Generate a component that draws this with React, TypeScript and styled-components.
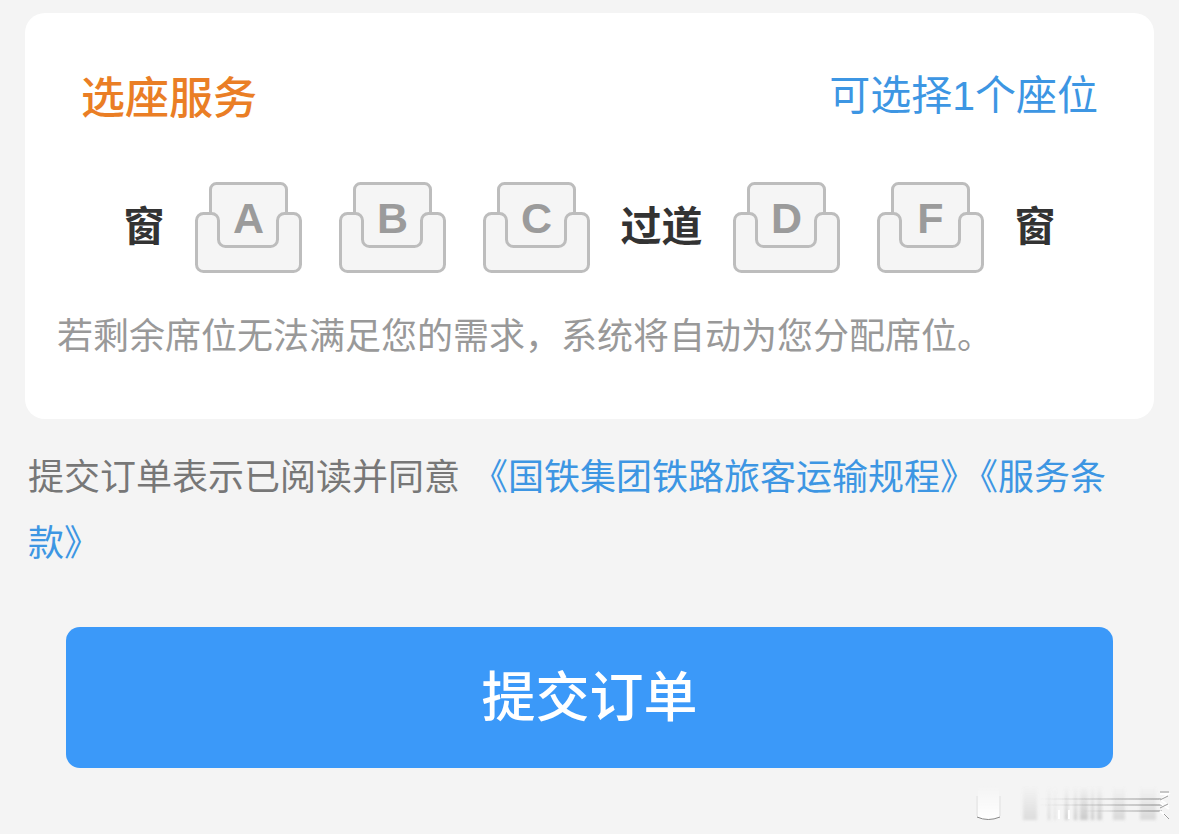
import React, { useState } from "react";
import styled, { createGlobalStyle } from "styled-components";

const GlobalStyle = createGlobalStyle`
  * { box-sizing: border-box; }
  body {
    margin: 0;
    background: #f4f4f4;
    font-family: "Noto Sans CJK SC", sans-serif;
  }
`;

const Page = styled.main`
  padding: 13px 25px 8px;
`;

const Card = styled.section`
  background: #fff;
  border-radius: 20px;
  padding: 50px 32px 62px;
`;

const CardHeader = styled.header`
  display: flex;
  justify-content: space-between;
  align-items: flex-start;
  padding: 0 24px;
`;

const Title = styled.h1`
  margin: 0;
  font-size: 44px;
  line-height: 64px;
  font-weight: 500;
  color: #ea7e25;
`;

const SeatCount = styled.span`
  font-family: "Liberation Sans", "Noto Sans CJK SC", sans-serif;
  font-size: 41px;
  line-height: 66px;
  color: #3d96e3;
`;

const SeatRow = styled.div`
  display: flex;
  justify-content: center;
  align-items: flex-start;
  gap: 30px;
  margin-top: 53px;
`;

const SeatGroup = styled.div`
  display: flex;
  gap: 36px;
`;

const Place = styled.span`
  font-size: 41px;
  line-height: 83px;
  font-weight: 700;
  color: #333;
`;

const SeatButton = styled.button`
  display: grid;
  justify-items: center;
  padding: 0;
  border: 0;
  background: none;
  cursor: pointer;
`;

const SeatShape = styled.svg<{ $selected: boolean }>`
  grid-area: 1 / 1;
  display: block;
  fill: ${(p) => (p.$selected ? "#dceeff" : "#f5f5f5")};
  stroke: ${(p) => (p.$selected ? "#3b99f9" : "#bdbdbd")};
  stroke-width: 3;
`;

const SeatLetter = styled.span<{ $selected: boolean }>`
  grid-area: 1 / 1;
  padding-top: 12px;
  font-family: "Liberation Sans", Arial, sans-serif;
  font-size: 43px;
  line-height: 48px;
  font-weight: 700;
  color: ${(p) => (p.$selected ? "#3b99f9" : "#9b9b9b")};
`;

const Note = styled.p`
  margin: 35px 0 0;
  font-size: 36px;
  line-height: 48px;
  color: #999;
`;

const Terms = styled.p`
  margin: 22px 3px 0;
  font-size: 36px;
  line-height: 66px;
  color: #777;
`;

const TermsLink = styled.a`
  margin-left: 4px;
  color: #3d96e3;
  text-decoration: none;
`;

const Submit = styled.button`
  display: block;
  width: calc(100% - 82px);
  margin: 54px 41px 0;
  padding: 26px 30px 34px;
  border: 0;
  border-radius: 14px;
  background: #3b99f9;
  color: #fff;
  font-family: inherit;
  font-size: 54px;
  line-height: 81px;
  font-weight: 500;
  cursor: pointer;
`;

const Footer = styled.footer`
  display: flex;
  justify-content: flex-end;
  margin: 18px -20px 0 0;
`;

function Seat({ letter, selected, onPick }: { letter: string; selected: boolean; onPick: () => void }) {
  return (
    <SeatButton type="button" aria-pressed={selected} onClick={onPick}>
      <SeatShape $selected={selected} width="108" height="92" viewBox="0 0 108 92" aria-hidden="true">
        <path d="M15.5 34V7.500a6 6 0 0 1 6-6h64a6 6 0 0 1 6 6V34L83 64H24z" stroke="none" />
        <path d="M15.5 33V7.500a6 6 0 0 1 6-6h64a6 6 0 0 1 6 6V33" fill="none" />
        <path d="M1.500 38.500a7 7 0 0 1 7-7h8a7 7 0 0 1 7 7v19a7 7 0 0 0 7 7h45a7 7 0 0 0 7-7v-19a7 7 0 0 1 7-7h9a7 7 0 0 1 7 7v44a7 7 0 0 1-7 7h-90a7 7 0 0 1-7-7z" />
      </SeatShape>
      <SeatLetter $selected={selected}>{letter}</SeatLetter>
    </SeatButton>
  );
}

const smudges = [
  { x: 53, w: 14, o: 0.16 },
  { x: 78, w: 2, o: 0.22 },
  { x: 84, w: 2, o: 0.14 },
  { x: 95, w: 3, o: 0.28 },
  { x: 104, w: 3, o: 0.28 },
  { x: 110, w: 8, o: 0.28 },
  { x: 121, w: 3, o: 0.3 },
  { x: 127, w: 5, o: 0.25 },
  { x: 143, w: 12, o: 0.18 },
  { x: 170, w: 16, o: 0.18 },
];

function Watermark() {
  return (
    <svg width="204" height="40" viewBox="0 0 204 40" aria-hidden="true">
      <defs>
        <linearGradient id="fade" x1="0" y1="0" x2="0" y2="1">
          <stop offset="0" stopColor="#888" stopOpacity="0" />
          <stop offset="1" stopColor="#888" />
        </linearGradient>
        <linearGradient id="light" x1="0" y1="0" x2="0" y2="1">
          <stop offset="0" stopColor="#fff" stopOpacity="0" />
          <stop offset="1" stopColor="#fff" />
        </linearGradient>
        <linearGradient id="side" x1="0" y1="0" x2="1" y2="0">
          <stop offset="0" stopColor="#888" stopOpacity="0" />
          <stop offset="1" stopColor="#888" stopOpacity="0.5" />
        </linearGradient>
        <filter id="soft" x="-20%" y="-20%" width="140%" height="140%">
          <feGaussianBlur stdDeviation="1.5" />
        </filter>
        <filter id="slight" x="-20%" y="-20%" width="140%" height="140%">
          <feGaussianBlur stdDeviation="0.7" />
        </filter>
      </defs>
      <g filter="url(#slight)">
        <path d="M8 0v31q10 5 21 0V0z" fill="url(#light)" />
        <path d="M7 31q11 5 23 0" fill="none" stroke="#888" strokeWidth="1" />
        <path d="M7 30V10M30 30V10" stroke="#e2e2e2" strokeWidth="1" />
      </g>
      <g filter="url(#soft)">
        {smudges.map((s) => (
          <rect key={s.x} x={s.x} y="0" width={s.w} height="34" opacity={s.o * 1.4} fill="url(#fade)" />
        ))}
      </g>
      <g filter="url(#slight)">
        <path d="M89 33V24M99 33V24" stroke="#fff" strokeWidth="2" />
        <rect x="70" y="12" width="122" height="2" fill="url(#side)" />
        <rect x="70" y="18" width="122" height="2" fill="url(#side)" />
        <rect x="110" y="24" width="82" height="2" fill="url(#side)" />
        <path d="M190 8h8l-7 6 8 6M190 17l9 6M190 25l8 7" fill="none" stroke="#fff" strokeWidth="2" />
        <path d="M190 6h9M190 14l8-4M190 22l8-4M194 28l5 5" fill="none" stroke="#999" strokeWidth="1" />
      </g>
    </svg>
  );
}

export default function App() {
  const [picked, setPicked] = useState<string | null>(null);
  const seats = (letters: string[]) => (
    <SeatGroup>
      {letters.map((l) => (
        <Seat key={l} letter={l} selected={picked === l} onPick={() => setPicked(picked === l ? null : l)} />
      ))}
    </SeatGroup>
  );

  return (
    <>
      <GlobalStyle />
      <Page lang="zh-CN">
        <Card>
          <CardHeader>
            <Title>选座服务</Title>
            <SeatCount>可选择1个座位</SeatCount>
          </CardHeader>
          <SeatRow>
            <Place>窗</Place>
            {seats(["A", "B", "C"])}
            <Place>过道</Place>
            {seats(["D", "F"])}
            <Place>窗</Place>
          </SeatRow>
          <Note>若剩余席位无法满足您的需求，系统将自动为您分配席位。</Note>
        </Card>
        <Terms>
          提交订单表示已阅读并同意 <TermsLink href="#rules">《国铁集团铁路旅客运输规程》</TermsLink>
          <TermsLink href="#service">《服务条款》</TermsLink>
        </Terms>
        <Submit type="button">提交订单</Submit>
        <Footer>
          <Watermark />
        </Footer>
      </Page>
    </>
  );
}
